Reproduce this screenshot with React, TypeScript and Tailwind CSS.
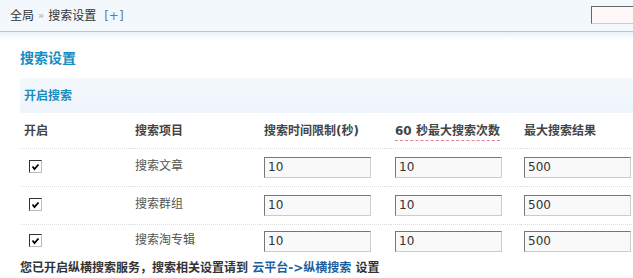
const font = { fontFamily: '"DejaVu Sans", "Noto Sans CJK SC", sans-serif' }

type Row = { name: string; time: string; count: string; max: string }

const rows: Row[] = [
  { name: '搜索文章', time: '10', count: '10', max: '500' },
  { name: '搜索群组', time: '10', count: '10', max: '500' },
  { name: '搜索淘专辑', time: '10', count: '10', max: '500' },
]

function Check() {
  return (
    <span className="ml-[5px] inline-flex h-[13px] w-[13px] items-center justify-center border border-t-[#333] border-l-[#333] border-r-[#bbb] border-b-[#bbb] bg-white align-middle">
      <svg width="9" height="8" viewBox="0 0 9 8">
        <path d="M1.5 3.5 L3.5 6 L7.5 1.5" fill="none" stroke="#000" strokeWidth="1.8" />
      </svg>
    </span>
  )
}

function Field({ value }: { value: string }) {
  return (
    <input
      defaultValue={value}
      className="h-[21px] w-[107px] border border-t-[#777] border-l-[#777] border-r-[#ccc] border-b-[#ccc] bg-[#f9f9f9] px-[3px] text-[12px] text-[#333] outline-none"
      style={font}
    />
  )
}

export default function App() {
  return (
    <div className="h-[278px] w-[633px] overflow-hidden bg-white text-[12px] text-[#444]" style={font}>
      <div className="flex h-[32px] items-center justify-between border-b border-[#b9c8cc] bg-[#f2f8fb] pl-[10px]">
        <div className="flex items-center gap-[4px] text-[#333]">
          <span>全局</span>
          <span className="text-[10px] text-[#aaa]">»</span>
          <span>搜索设置</span>
          <span className="ml-[4px] text-[#5a7ea8]">[+]</span>
        </div>
        <input className="mb-[1px] h-[18px] w-[60px] shrink-0 translate-x-[18px] border border-t-[#666] border-l-[#666] border-r-[#ccc] border-b-[#ccc] bg-[#fff8f8] outline-none" />
      </div>
      <div className="h-[8px] bg-gradient-to-b from-[#e8f1f9] to-white" />

      <div className="pl-[20px]">
        <div className="mt-[7px] h-[22px] text-[14px] font-bold leading-[22px] text-[#138dc2]">搜索设置</div>

        <div className="mt-[9px] flex h-[35px] items-center bg-gradient-to-b from-[#f3f8fd] to-[#eef5fb] pl-[4px] font-bold text-[#1a8cbf]">
          开启搜索
        </div>

        <table className="w-[620px] table-fixed border-collapse">
          <colgroup>
            <col className="w-[111px]" />
            <col className="w-[129px]" />
            <col className="w-[131px]" />
            <col className="w-[129px]" />
            <col />
          </colgroup>
          <thead>
            <tr className="h-[35px] border-b border-dotted border-[#ddd] text-left font-bold text-[#444]">
              <th className="pl-[4px] pt-[1px]">开启</th>
              <th className="pl-[4px] pt-[1px]">搜索项目</th>
              <th className="pl-[4px] pt-[1px]">搜索时间限制(秒)</th>
              <th className="pl-[4px] pt-[1px]">
                <span className="border-b border-dashed border-[#e0849a] pb-[2px]">60 秒最大搜索次数</span>
              </th>
              <th className="pl-[4px] pt-[1px]">最大搜索结果</th>
            </tr>
          </thead>
          <tbody>
            {rows.map((r, i) => (
              <tr
                key={r.name}
                className={i < rows.length - 1 ? 'h-[38px] border-b border-dotted border-[#ddd]' : 'h-[34px]'}
              >
                <td className="pl-[4px] pb-[2px] align-middle">
                  <Check />
                </td>
                <td className="pl-[4px] pb-[2px] text-[#555]">{r.name}</td>
                <td className="pl-[4px]">
                  <Field value={r.time} />
                </td>
                <td className="pl-[4px]">
                  <Field value={r.count} />
                </td>
                <td className="pl-[4px]">
                  <Field value={r.max} />
                </td>
              </tr>
            ))}
          </tbody>
        </table>

        <div className="mt-[1px] font-bold text-[#333]">
          您已开启纵横搜索服务，搜索相关设置请到 <span className="text-[#1c5fa0]">云平台-&gt;纵横搜索</span> 设置
        </div>
      </div>
    </div>
  )
}
